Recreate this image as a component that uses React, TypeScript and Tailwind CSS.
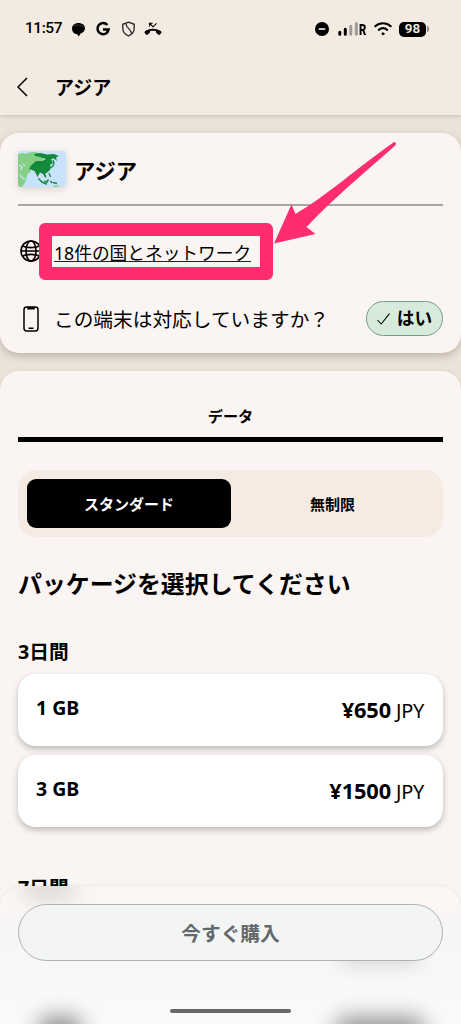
import type { ReactNode } from "react";

type Plan = { size: string; price: string };

const plans: Plan[] = [
  { size: "1 GB", price: "¥650" },
  { size: "3 GB", price: "¥1500" },
];

function StatusBar() {
  return (
    <div className="flex h-[58px] items-center justify-between pl-[25px] pr-[32px] font-['Roboto','Noto_Sans',sans-serif]">
      <div className="flex items-center">
        <span className="w-[36px] whitespace-nowrap text-[15.5px] font-medium leading-none tracking-[-0.45px]">11:57</span>
        <svg className="ml-[10px]" width="15" height="15" viewBox="0 0 15 15">
          <path d="M7.5 1C11.4 1 14 3.3 14 6.3C14 9 12.2 10.8 9.6 11.5L7.8 14.5L6.2 12.2C2.9 11.8 1 9.5 1 6.4C1 3.3 3.6 1 7.5 1Z" />
          <path d="M1.5 4.3C4 2.6 10 2.4 13 5.5" stroke="#777" strokeWidth=".5" fill="none" />
        </svg>
        <svg className="ml-[9px]" width="16" height="16" viewBox="0 0 16 16" fill="none" stroke="#000" strokeWidth="2.5">
          <path d="M12.4 4A5.6 5.6 0 1 0 13.6 8.6H8" />
        </svg>
        <svg className="ml-[10px]" width="15" height="16" viewBox="0 0 15 16" fill="none" stroke="#222" strokeWidth="1.3">
          <path d="M7.5 1.2L13.2 3.3V7.5C13.2 11 11 13.4 7.5 15C4 13.4 1.8 11 1.8 7.5V3.3Z" />
          <path d="M5 2.4C4.6 7.5 10.6 7.6 10.6 12.8" />
        </svg>
        <svg className="ml-[8px]" width="18" height="16" viewBox="0 0 18 16">
          <path d="M.8 12.2C.2 11.4.6 10.4 1.6 9.8C6 7 12 7 16.4 9.8C17.4 10.4 17.8 11.4 17.2 12.2L15.9 13.6C15.5 14 15 14 14.6 13.7L12.6 12.3C12 11.9 11.9 10.4 11.9 10.1C10 9.6 8 9.6 6.1 10.1C6.1 10.4 6 11.9 5.4 12.3L3.4 13.7C3 14 2.5 14 2.1 13.6Z" />
          <path d="M5.5 5.5V2.2H8.7M5.8 2.5L9 5.8L12.5 2.3" stroke="#000" strokeWidth="1.1" fill="none" />
        </svg>
      </div>
      <div className="flex items-center">
        <svg width="14" height="14" viewBox="0 0 14 14">
          <circle cx="7" cy="7" r="7" />
          <path d="M3.7 7H10.3" stroke="#ddd6cd" strokeWidth="1.8" />
        </svg>
        <svg className="ml-[9px]" width="20" height="14" viewBox="0 0 20 14" strokeWidth="3" strokeLinecap="round">
          <path d="M1.8 10.2V12.3M7.3 7.2V12.3" stroke="#000" />
          <path d="M12.8 4.2V12.3M18.3 1.6V12.3" stroke="#a09a94" />
        </svg>
        <span className="ml-px w-[8px] pt-[3px] text-[15px] font-black leading-none">
          <span className="inline-block origin-left scale-x-75">R</span>
        </span>
        <svg className="ml-[7px]" width="18" height="14" viewBox="0 0 18 14" fill="none" stroke="#000" strokeLinecap="round">
          <path d="M1.3 4.2C5.8.2 12.2.2 16.7 4.2" strokeWidth="2.1" />
          <path d="M4.8 7.9C7.4 5.7 10.6 5.7 13.2 7.9" strokeWidth="2.1" />
          <circle cx="9" cy="11.8" r="1.1" fill="#000" strokeWidth=".8" />
        </svg>
        <span className="ml-[7px] flex h-[15px] w-[27px] items-center justify-center rounded-[5px] bg-black text-[13.5px] font-semibold leading-none text-[#f3ebe1]">98</span>
        <span className="ml-px h-[6px] w-[2px] rounded-r bg-[#8f8a85]" />
      </div>
    </div>
  );
}

function AsiaMap() {
  return (
    <svg className="rounded-[3px] shadow-[0_2px_8px_rgba(0,0,0,0.14)]" width="48" height="36" viewBox="0 0 48 36">
      <rect width="48" height="36" fill="#c9e2fc" />
      <path d="M0 3L5 2L8 3L11 1.5L17 1L28 4L25 9L14 14L12 18L13 20L9 24L8 30L4 36H0Z" fill="#85cf85" />
      <path d="M1 14L4 16L3 19M5 13L7 15M2 24L5 27L7 29" stroke="#c9e2fc" strokeWidth="1.2" fill="none" />
      <path d="M16 3L22 2L29 3.5L36 3L41 5L38 6.5L39 10L36 7.5L33 8L35 12L32 14L33 17L31 20L28.5 22L27 22.5L28.5 26L27 26.5L25 23L22 21.5L19.5 26L16.5 20L11 18L13 14.5L18 10L24 10L28 8L22 6L17 5Z" fill="#14883b" />
      <path d="M35 9L36 12L35 15L32.5 17M31 22L32.5 26" stroke="#14883b" strokeWidth="1.3" fill="none" />
      <path d="M20.5 27.5L24 31L29 33.2M26.5 30L29 31L30.5 28.5M32.5 30L34 32M35 31.5L39 32.5" stroke="#14883b" strokeWidth="1.5" fill="none" />
      <path d="M35 36L37 34L39 35L40 33.5L41 36Z" fill="#85cf85" />
    </svg>
  );
}

function Globe() {
  return (
    <svg width="22" height="22" viewBox="0 0 22 22" fill="none" stroke="#000" strokeWidth="1.6">
      <circle cx="11" cy="11" r="10" />
      <ellipse cx="11" cy="11" rx="5" ry="10" />
      <path d="M2.5 6C7 8.2 15 8.2 19.5 6M1 11H21M2.5 16C7 13.8 15 13.8 19.5 16" />
    </svg>
  );
}

function Phone() {
  return (
    <svg width="16" height="26" viewBox="0 0 16 26" fill="none" stroke="#000" strokeWidth="1.5">
      <rect x="1" y="1" width="14" height="24" rx="2.7" />
      <path d="M5 1.8H11V2.7H5ZM5.5 22.3H10.5" />
    </svg>
  );
}

function PlanCard({ size, price }: Plan) {
  return (
    <button className="flex h-[72px] w-full items-center justify-between rounded-[18px] bg-white pl-[18px] pr-[19px] shadow-[0_3px_6px_rgba(0,0,0,0.24)]">
      <span className="pb-[5px] text-[19.5px] font-bold">{size}</span>
      <span className="whitespace-nowrap text-[20px] tracking-[-0.3px]">
        <b className="text-[21.8px] font-bold tracking-[-0.1px]">{price}</b> JPY
      </span>
    </button>
  );
}

function Card({ className, children }: { className: string; children: ReactNode }) {
  return <section className={`rounded-[19px] bg-[#faf4f2] px-[18px] ${className}`}>{children}</section>;
}

export default function App() {
  return (
    <div className="relative flex h-[1024px] w-[461px] flex-col overflow-hidden bg-[#ece4da] font-['Noto_Sans','Noto_Sans_CJK_JP',sans-serif] text-black">
      <header className="h-[115px] shrink-0 bg-[#f3ebe1] shadow-[0_1px_4px_rgba(90,70,50,0.25)]">
        <StatusBar />
        <div className="flex h-[58px] items-center pl-[17px]">
          <svg width="11" height="20" viewBox="0 0 11 20" fill="none" stroke="#000" strokeWidth="1.5">
            <path d="M10 1L1 10L10 19" />
          </svg>
          <h1 className="ml-[27px] pt-[2px] text-[19px] font-bold leading-none">アジア</h1>
        </div>
      </header>

      <Card className="mt-[18px] h-[220px] shrink-0 shadow-[0_3px_9px_rgba(80,60,50,0.3)]">
        <div className="flex h-[73px] items-center border-b-2 border-[#aaa5a5]">
          <AsiaMap />
          <h2 className="ml-[8px] pt-[4px] text-[21.3px] font-bold leading-none">アジア</h2>
        </div>
        <div className="flex h-[90px] items-center pl-[2px]">
          <Globe />
          <a className="ml-[12px] h-[21px] border-b border-[#222] text-[17.7px] leading-[25px]">18件の国とネットワーク</a>
        </div>
        <div className="flex h-[45px] items-center pl-[5px]">
          <Phone />
          <span className="ml-[15px] whitespace-nowrap pt-[2px] text-[19.7px] leading-none">この端末は対応していますか？</span>
          <span className="ml-auto flex h-[35px] w-[77px] items-center justify-center gap-[7px] rounded-full border border-[#779d88] bg-[#d7ebdc]">
            <svg width="13" height="12" viewBox="0 0 13 12" fill="none" stroke="#000" strokeWidth="1.1">
              <path d="M.5 7L4.2 11L12.5 .7" />
            </svg>
            <b className="pt-px text-[17.7px] leading-none">はい</b>
          </span>
        </div>
      </Card>

      <Card className="mt-[18px] h-[670px] shrink-0 shadow-[0_1px_5px_rgba(80,60,50,0.16)]">
        <div className="flex h-[71px] items-center justify-center border-b-5 border-black pt-[26px] text-[15.2px] font-bold leading-none">データ</div>
        <div className="mt-[28px] flex h-[67px] rounded-[18px] bg-[#f5ebe2] p-[9px] text-[15px] font-bold">
          <button className="w-[204px] rounded-[9px] bg-black pt-[2px] text-white">スタンダード</button>
          <button className="flex-1 pt-[2px]">無制限</button>
        </div>
        <h2 className="mt-[30px] text-[23.9px] font-bold leading-[34px]">パッケージを選択してください</h2>
        <h3 className="mt-[36px] text-[19.7px] font-bold leading-[30px]">3日間</h3>
        <div className="mt-[7px] flex flex-col gap-[9px]">
          {plans.map((plan) => (
            <PlanCard key={plan.size} {...plan} />
          ))}
        </div>
        <h3 className="mt-[46px] text-[19.7px] font-bold leading-[30px]">7日間</h3>
      </Card>

      {/* purchase bar */}
      <footer className="absolute inset-x-0 bottom-0 h-[138px] overflow-hidden rounded-t-[22px] bg-linear-to-b from-[#faf6f4] via-[#f7f7f6] to-[#fafafa] px-[18px] pt-[18px] shadow-[0_0_3px_rgba(80,60,50,0.12)]">
        <span className="absolute left-[22px] top-[-6px] h-[18px] w-[54px] rounded-full bg-black/14 blur-[10px]" />
        <span className="absolute right-[42px] top-[60px] h-[16px] w-[80px] rounded-full bg-black/18 blur-[10px]" />
        <span className="absolute bottom-[-18px] left-[38px] h-[24px] w-[44px] rounded-full bg-black/50 blur-[11px]" />
        <span className="absolute bottom-[-18px] right-[36px] h-[24px] w-[90px] rounded-full bg-black/45 blur-[11px]" />
        <button className="relative h-[57px] w-full rounded-full border border-[#afb2b4] bg-[#f3f5f5] pt-[3px] text-[19.7px] font-bold text-[#62686b]">今すぐ購入</button>
        <span className="absolute bottom-[11px] left-[170px] h-[4px] w-[121px] rounded-full bg-[#666967]" />
      </footer>

      {/* highlight on the country list link */}
      <div className="absolute left-[39px] top-[223px] h-[57px] w-[234px] rounded-[6px] border-[13px] border-[#ff2d6e]" />
      <svg className="absolute left-[270px] top-[138px]" width="130" height="110" viewBox="270 138 130 110">
        <path d="M274 243.5L291.5 204.5L295.5 214C325 197 360 166 393 142.8C395.5 141.2 397 143.8 395 145.8C366 171 331 201 306.5 227L315.5 234Z" fill="#ff2d6e" />
      </svg>
    </div>
  );
}
